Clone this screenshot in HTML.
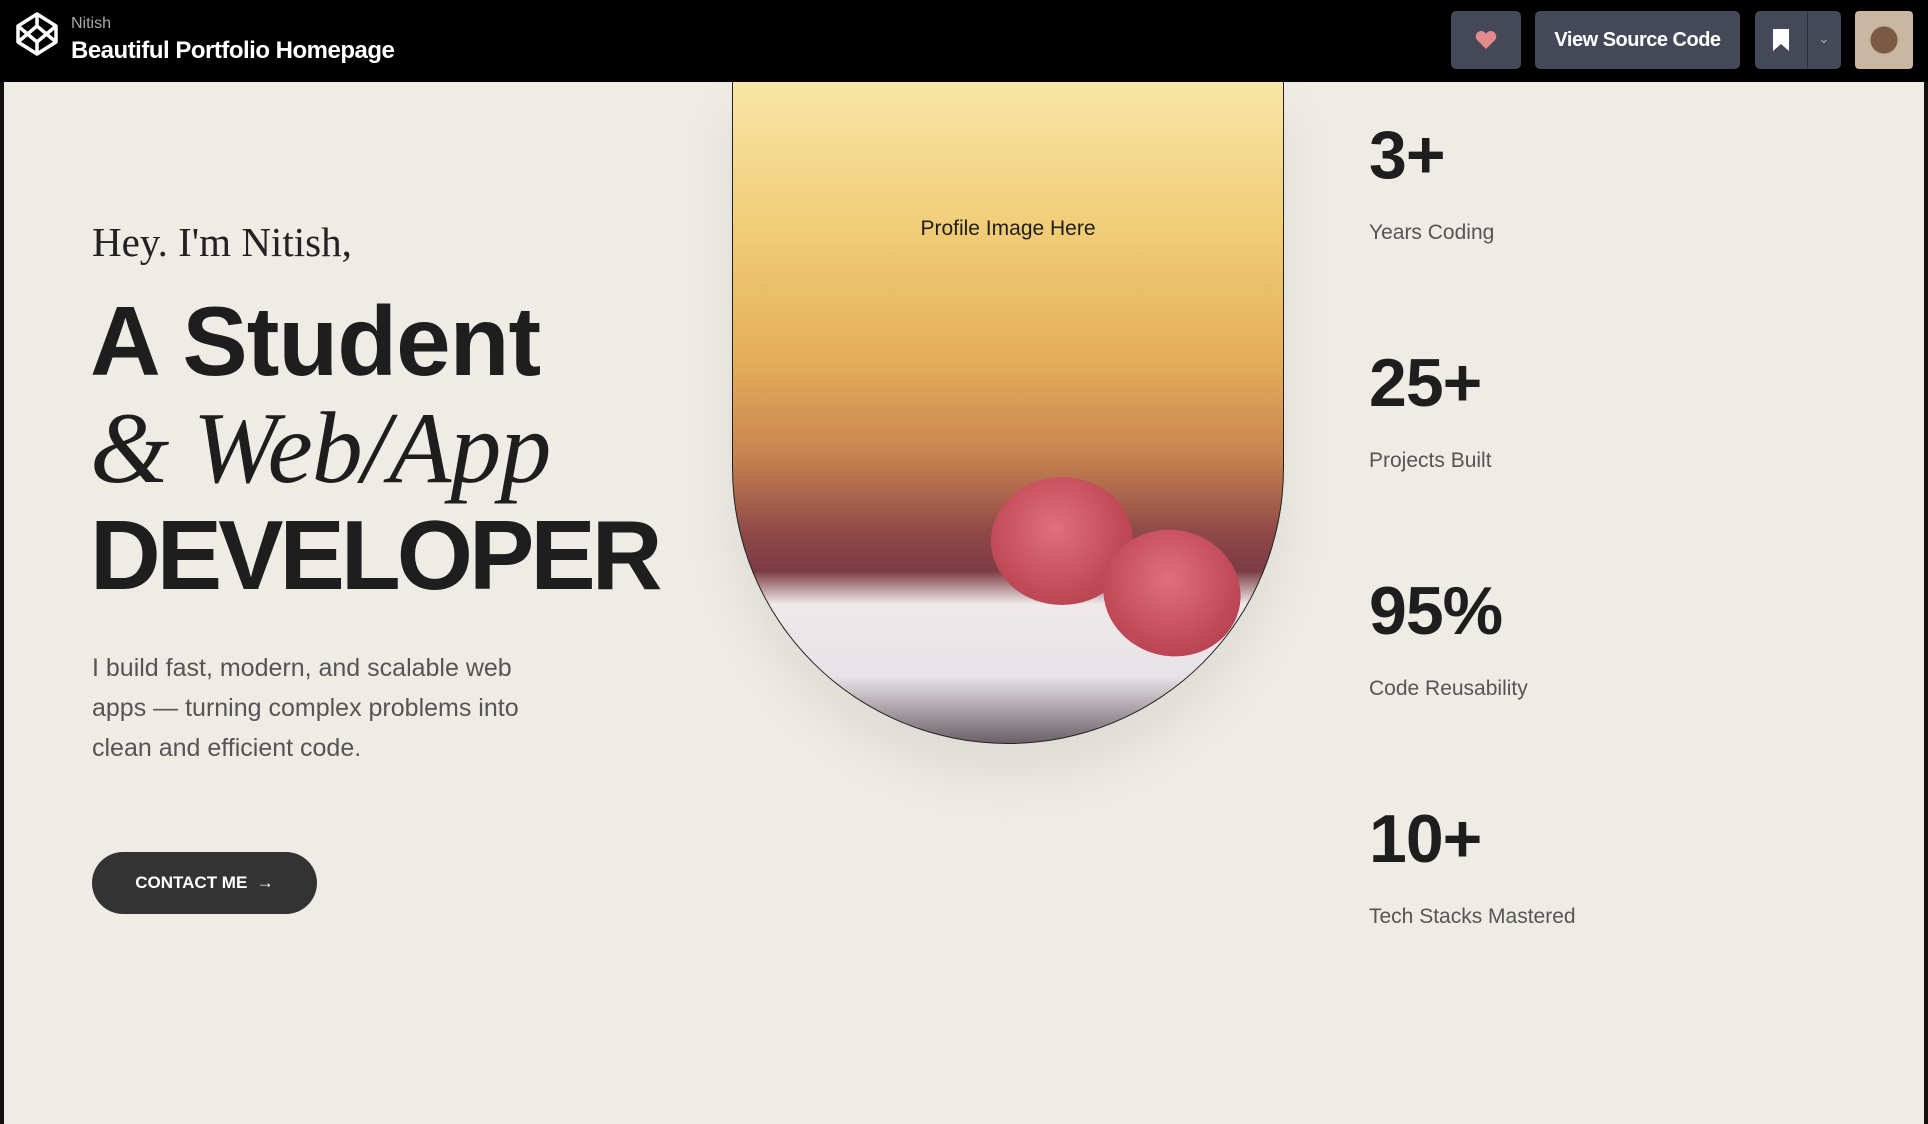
<!DOCTYPE html>
<html><head><meta charset="utf-8"><style>
*{margin:0;padding:0;box-sizing:border-box}
body{width:1928px;height:1124px;overflow:hidden;background:#efece5;font-family:"Liberation Sans",sans-serif;position:relative}
.hdr{position:absolute;left:0;top:0;width:1928px;height:82px;background:#000}
.side{position:absolute;top:82px;bottom:0;width:4px;background:#111}
.btn{position:absolute;top:11px;height:58px;background:#444857;border-radius:5px;color:#fff}
.img{position:absolute;left:732px;top:82px;width:552px;height:662px;border:1.5px solid #222;border-top:none;border-radius:0 0 276px 276px;overflow:hidden;
background:linear-gradient(180deg,#f8e6a6 0%,#f1cd78 22%,#e4ae5a 42%,#c98650 56%,#8f4a48 68%,#7c3b44 74%,#efe9ea 79%,#e7e2e6 90%,#6a6168 100%);box-shadow:0 30px 60px rgba(0,0,0,.08)}
.ber{position:absolute;border-radius:50%;background:radial-gradient(circle at 45% 40%,#e0707a,#c24a58 60%,#a73a48)}
.num{position:absolute;left:1369px;font-weight:bold;font-size:68px;color:#1e1e1e;letter-spacing:-1px}
.lbl{position:absolute;left:1369px;font-size:21px;color:#555}
</style></head><body>
<div class="hdr">
<svg style="position:absolute;left:15px;top:11px" width="44" height="46" viewBox="0 0 44 46" fill="none" stroke="#fff" stroke-width="3.5" stroke-linejoin="round"><path d="M22 3L41 15V31L22 43L3 31V15Z"/><path d="M22 3V15M22 31V43M3 15L22 31L41 15M3 31L22 15L41 31"/></svg>
<div style="position:absolute;left:71px;top:15px;color:#aaa;font-size:16px">Nitish</div>
<div style="position:absolute;left:71px;top:37px;color:#fff;font-size:24px;font-weight:bold;letter-spacing:-0.5px">Beautiful Portfolio Homepage</div>
<div class="btn" style="left:1451px;width:70px"><svg style="position:absolute;left:24px;top:19px" width="22" height="20" viewBox="0 0 22 20"><path d="M11 19L2 10C-1 6 2 1 6 1C8 1 10 2 11 4C12 2 14 1 16 1C20 1 23 6 20 10Z" fill="#e58a8a"/></svg></div>
<div class="btn" style="left:1535px;width:205px;font-size:20px;text-align:center;line-height:58px;font-weight:bold;letter-spacing:-0.5px">View Source Code</div>
<div class="btn" style="left:1755px;width:86px"><svg style="position:absolute;left:17px;top:17px" width="18" height="24" viewBox="0 0 18 24"><path d="M1 1H17V23L9 16L1 23Z" fill="#fff"/></svg><div style="position:absolute;left:52px;top:0;width:1px;height:58px;background:#2c2f39"></div><div style="position:absolute;left:63px;top:19px;color:#aaa;font-size:14px">⌄</div></div>
<div style="position:absolute;left:1855px;top:11px;width:58px;height:58px;border-radius:4px;background:radial-gradient(ellipse at 50% 50%,#7a5a45 0 32%,#c9b6a0 34% 100%)"></div>
</div>
<div class="side" style="left:0"></div><div class="side" style="right:0"></div>
<div class="img">
<div style="position:absolute;left:0;right:0;top:135px;text-align:center;font-size:21px;color:#1e1e1e">Profile Image Here</div>
<div class="ber" style="left:258px;top:395px;width:142px;height:128px"></div>
<div class="ber" style="left:370px;top:448px;width:138px;height:126px;transform:rotate(15deg)"></div>
</div>
<div style="position:absolute;left:92px;top:218px;font-family:'Liberation Serif',serif;font-size:41px;color:#222">Hey. I'm Nitish,</div>
<div style="position:absolute;left:90px;top:288px;font-weight:bold;font-size:98px;line-height:107px;color:#1e1e1e;letter-spacing:-1px">A Student<br><span style="font-family:'Liberation Serif',serif;font-style:italic;font-weight:normal;font-size:102px">&amp; Web/App</span><br><span style="letter-spacing:-4px">DEVELOPER</span></div>
<div style="position:absolute;left:92px;top:648px;font-size:25px;line-height:40px;color:#555;width:480px">I build fast, modern, and scalable web apps — turning complex problems into clean and efficient code.</div>
<div style="position:absolute;left:92px;top:852px;width:225px;height:62px;border-radius:31px;background:#333;color:#fff;font-weight:bold;font-size:17px;line-height:62px;text-align:center">CONTACT ME &nbsp;→</div>
<div class="num" style="top:116px">3+</div><div class="lbl" style="top:221px">Years Coding</div>
<div class="num" style="top:344px">25+</div><div class="lbl" style="top:449px">Projects Built</div>
<div class="num" style="top:572px">95%</div><div class="lbl" style="top:677px">Code Reusability</div>
<div class="num" style="top:800px">10+</div><div class="lbl" style="top:905px">Tech Stacks Mastered</div>
</body></html>
